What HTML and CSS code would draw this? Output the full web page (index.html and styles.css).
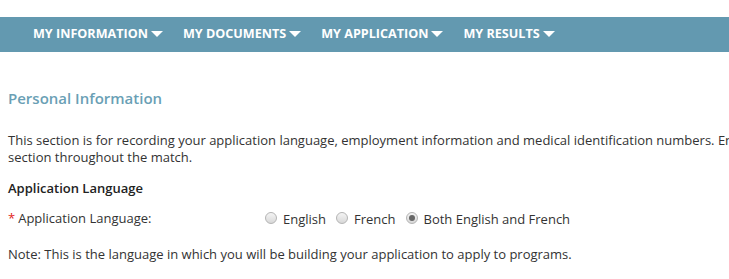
FILE: index.html
```html
<!DOCTYPE html>
<html lang="en">
<head>
    <meta charset="UTF-8">
    <title>Personal Information</title>
    <link rel="stylesheet" href="styles.css">
</head>
<body>

    <div class="topnav">
      <a class="nav-item">MY INFORMATION <span class="caret"></span></a>
      <a class="nav-item">MY DOCUMENTS <span class="caret"></span></a>
      <a class="nav-item">MY APPLICATION <span class="caret"></span></a>
      <a class="nav-item">MY RESULTS <span class="caret"></span></a>
    </div>

    <div class="content">
      <h2 class="page-title">Personal Information</h2>

      <p class="intro">This section is for recording your application language, employment information and medical identification numbers. Entries made in this section throughout the match.</p>

      <h4 class="sub-title">Application Language</h4>

      <div class="field-row">
        <label class="field-label"><span class="req">*</span>Application Language:</label>
        <div class="options">
          <label class="opt"><input type="radio" name="lang"> English</label>
          <label class="opt"><input type="radio" name="lang"> French</label>
          <label class="opt"><input type="radio" name="lang" checked> Both English and French</label>
        </div>
      </div>

      <p class="note">Note: This is the language in which you will be building your application to apply to programs.</p>
    </div>

</body>
</html>
```

FILE: styles.css
```css
* {
    box-sizing: border-box;
}

body {
    margin: 0;
    font-family: "Open Sans", sans-serif;
    font-size: 13px;
    color: #333;
    background: #fff;
    overflow: hidden;
}

.topnav {
    margin-top: 17px;
    height: 35px;
    background-color: #6399b0;
    display: flex;
    align-items: center;
    padding: 0 0 2px 33px;
    gap: 20px;
    white-space: nowrap;
}

.nav-item {
    color: #fff;
    font-weight: bold;
    font-size: 12.6px;
    display: flex;
    align-items: center;
    gap: 3px;
}

.caret {
    width: 0;
    height: 0;
    border-left: 6px solid transparent;
    border-right: 6px solid transparent;
    border-top: 6px solid #fff;
    margin-top: 1px;
}

.content {
    padding: 0 8px;
}

.page-title {
    margin: 36px 0 0;
    font-size: 15px;
    font-weight: 600;
    color: #6a9fb5;
    line-height: 20px;
}

.intro {
    margin: 24px 0 0;
    line-height: 17px;
    width: 850px;
}

.sub-title {
    margin: 14px 0 0;
    font-size: 13px;
    font-weight: 600;
    color: #222;
    line-height: 17px;
}

.field-row {
    display: flex;
    align-items: center;
    margin-top: 12px;
    height: 17px;
}

.field-label {
    width: 257px;
}

.req {
    color: #e2231a;
    margin-right: 3px;
}

.options {
    display: flex;
    align-items: center;
    gap: 10px;
}

.opt {
    display: flex;
    align-items: center;
    gap: 6px;
    margin-top: 2px;
}

.opt input {
    -webkit-appearance: none;
    appearance: none;
    margin: 0 0 2px;
    width: 12px;
    height: 12px;
    border-radius: 50%;
    border: 1px solid #b4b4b4;
    background: linear-gradient(#f4f4f4, #d8d8d8);
    position: relative;
}

.opt input:checked::after {
    content: "";
    position: absolute;
    left: 2px;
    top: 2px;
    width: 6px;
    height: 6px;
    border-radius: 50%;
    background: #666;
}

.note {
    margin: 20px 0 0;
    line-height: 17px;
}
```
